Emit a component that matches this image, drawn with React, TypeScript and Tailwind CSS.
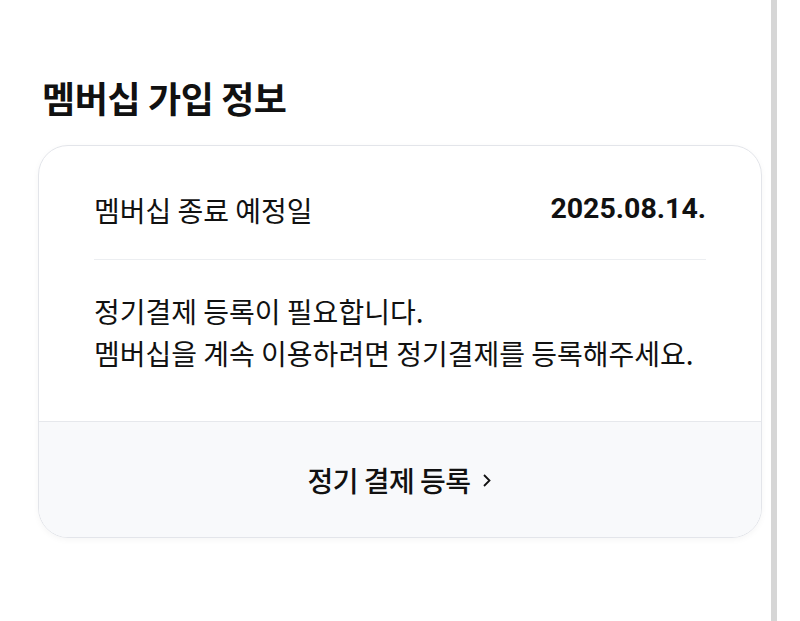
export default function App() {
  return (
    <div
      className="flex h-[621px] w-[800px] bg-white text-[#111]"
      style={{ fontFamily: '"Noto Sans CJK KR", "Noto Sans", sans-serif' }}
    >
      <div className="w-[771px] pl-[38px] pr-[9px] pt-[72px]">
        <h2 className="pl-[4px] text-[36px] font-bold leading-[50px] tracking-[-0.4px]">멤버십 가입 정보</h2>
        <div className="mt-[23px] overflow-hidden rounded-[30px] border border-[#e3e5ea] shadow-[0_2px_6px_rgba(0,0,0,0.04)]">
          <div className="px-[55px]">
            <div className="flex h-[114px] items-center justify-between border-b border-[#eceef1] pt-[14px]">
              <span className="text-[28px]">멤버십 종료 예정일</span>
              <span className="text-[28.5px] font-bold" style={{ fontFamily: 'Roboto, sans-serif' }}>2025.08.14.</span>
            </div>
            <div className="pb-[47px] pt-[30px] text-[28px] leading-[42px]">
              <p>정기결제 등록이 필요합니다.</p>
              <p>멤버십을 계속 이용하려면 정기결제를 등록해주세요.</p>
            </div>
          </div>
          <button className="flex h-[116px] w-full items-center justify-center gap-[10px] border-t border-[#e6e8ec] bg-[#f8f9fb] text-[28px] font-medium tracking-[-0.5px]">
            정기 결제 등록
            <svg width="12" height="22" viewBox="0 0 12 22" fill="none" stroke="#111" strokeWidth="1.8">
              <path d="M3 6l5.5 5.5L3 17" />
            </svg>
          </button>
        </div>
      </div>
      <div className="h-full w-[6px] bg-[#d6d6d6]" />
      <div className="flex-1" />
    </div>
  );
}
